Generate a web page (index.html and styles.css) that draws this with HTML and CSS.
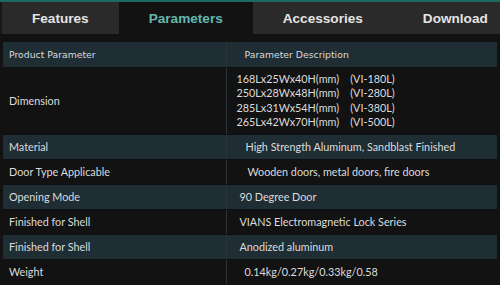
FILE: index.html
```html
<!DOCTYPE html>
<html lang="en">
<head>
  <meta charset="UTF-8" />
  <meta name="viewport" content="width=device-width, initial-scale=1.0"/>
  <title>Product Parameters</title>
  <link rel="stylesheet" href="styles.css">
</head>
<body>

  <div class="product-tabs">
    <div class="tab-bar">
      <div class="tab">Features</div>
      <div class="tab active">Parameters</div>
      <div class="tab">Accessories</div>
      <div class="tab">Download</div>
    </div>

    <!-- Parameters panel -->
    <div class="panel">
      <table class="param-table">
        <thead>
          <tr>
            <th>Product Parameter</th>
            <th>Parameter Description</th>
          </tr>
        </thead>
        <tbody>
          <tr class="dark tall">
            <td>Dimension</td>
            <td class="dims">
              <div>168Lx25Wx40H(mm)&nbsp;&nbsp;&nbsp;&nbsp;(VI-180L)</div>
              <div>250Lx28Wx48H(mm)&nbsp;&nbsp;&nbsp;&nbsp;(VI-280L)</div>
              <div>285Lx31Wx54H(mm)&nbsp;&nbsp;&nbsp;&nbsp;(VI-380L)</div>
              <div>265Lx42Wx70H(mm)&nbsp;&nbsp;&nbsp;&nbsp;(VI-500L)</div>
            </td>
          </tr>
          <tr>
            <td>Material</td>
            <td class="indent-2">High Strength Aluminum, Sandblast Finished</td>
          </tr>
          <tr class="dark">
            <td>Door Type Applicable</td>
            <td class="indent-3">Wooden doors, metal doors, fire doors</td>
          </tr>
          <tr>
            <td>Opening Mode</td>
            <td>90 Degree Door</td>
          </tr>
          <tr class="dark">
            <td>Finished for Shell</td>
            <td>VIANS Electromagnetic Lock Series</td>
          </tr>
          <tr>
            <td>Finished for Shell</td>
            <td>Anodized aluminum</td>
          </tr>
          <tr class="dark">
            <td>Weight</td>
            <td class="indent-1">0.14kg/0.27kg/0.33kg/0.58</td>
          </tr>
        </tbody>
      </table>
    </div>
  </div>

</body>
</html>
```

FILE: styles.css
```css
:root {
  --accent: #1d6a63;
  --accent-text: #63b8ad;
  --tab-bg: #2a2a2a;
  --page-bg: #121212;
  --row-teal: #1f2d34;
  --row-dark: #121212;
  --text: #dcdcdc;
}

* {
  box-sizing: border-box;
  margin: 0;
  padding: 0;
}

body {
  background: #171717;
  color: var(--text);
  width: 500px;
  height: 285px;
  overflow: hidden;
}

.product-tabs {
  border-top: 2px solid var(--accent);
  padding-left: 2px;
}

.tab-bar {
  display: flex;
  height: 32px;
  overflow: hidden;
  white-space: nowrap;
  background: var(--page-bg);
}

.tab {
  flex: none;
  padding: 0 30px;
  display: flex;
  align-items: center;
  background: var(--tab-bg);
  font-family: 'Liberation Sans', Arial, sans-serif;
  font-weight: bold;
  font-size: 13.6px;
  color: #e4e4e4;
}

.tab.active {
  background: var(--page-bg);
  color: var(--accent-text);
}

.panel {
  background: var(--page-bg);
  margin-left: -2px;
  padding: 8px 3px 2px 3px;
}

.param-table {
  width: 100%;
  border-collapse: collapse;
  font-family: Lato, 'Open Sans', sans-serif;
  font-size: 10.8px;
}

.param-table tr {
  height: 25px;
}

.param-table tr.tall {
  height: 67px;
}

.param-table th,
.param-table td {
  text-align: left;
  vertical-align: middle;
  padding: 0 6px;
  border-bottom: 1px solid #0d0f10;
}

.param-table th {
  font-family: 'DejaVu Sans', Verdana, sans-serif;
  font-size: 9.3px;
  font-weight: normal;
  background: var(--row-teal);
}

.param-table tr > :first-child {
  width: 223px;
  border-right: 1px solid #2a3338;
}

.param-table tr > :last-child {
  padding-left: 13px;
}

.param-table th:last-child {
  padding-left: 18px;
}

.param-table tbody tr {
  background: var(--row-teal);
}

.param-table tbody tr.dark {
  background: var(--row-dark);
}

.param-table td.dims {
  padding-left: 10px;
  line-height: 14.5px;
}

.param-table td.indent-1 {
  padding-left: 18px;
}

.param-table td.indent-2 {
  padding-left: 19px;
}

.param-table td.indent-3 {
  padding-left: 21px;
}
```
